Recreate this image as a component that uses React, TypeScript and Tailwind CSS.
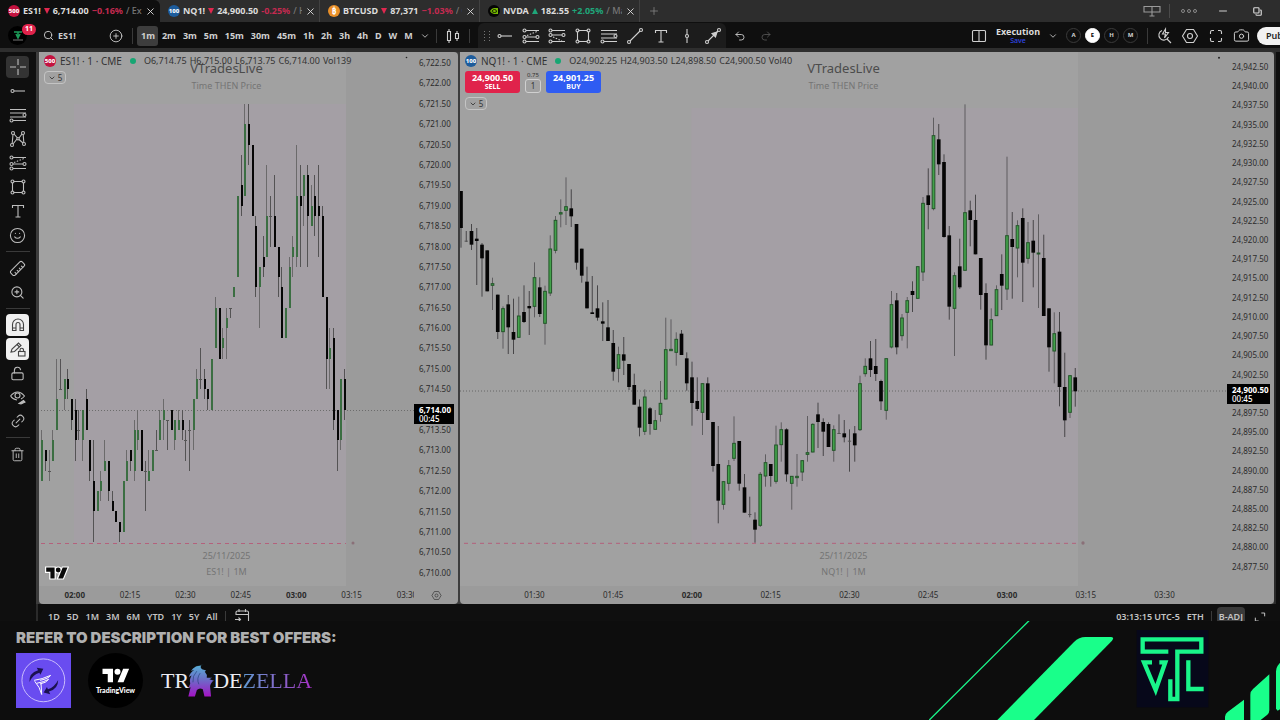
import type { ReactNode } from "react";
import {
  Camera,
  ChevronDown,
  CirclePlus,
  Copy,
  Link2,
  LockOpen,
  Minus,
  Plus,
  Redo2,
  Ruler,
  Search,
  Smile,
  Trash2,
  Undo2,
  X,
  ZoomIn,
} from "lucide-react";

type Candle = [high: number, top: number, bottom: number, low: number, up: 0 | 1];

/* One-minute bars in quarter-point ticks above 6,710.00, from 01:51. */
const ES: Candle[] = [
  [14, 13, 9, 9, 1], [12, 12, 11, 10, 0], [12, 10, 10, 9, 1], [14, 13, 11, 11, 1], [21, 17, 14, 14, 1],
  [21, 18, 18, 18, 0], [19, 19, 17, 16, 1], [20, 19, 18, 17, 0], [17, 17, 15, 14, 0], [17, 16, 13, 11, 0],
  [16, 14, 14, 13, 0], [16, 16, 13, 11, 1], [18, 17, 14, 14, 0], [13, 13, 10, 9, 0], [13, 9, 6, 3, 0],
  [8, 8, 6, 6, 1], [10, 9, 8, 7, 1], [13, 11, 10, 10, 1], [11, 11, 8, 7, 0], [8, 7, 6, 6, 0],
  [6, 6, 5, 5, 0], [5, 5, 4, 3, 0], [9, 9, 4, 4, 1], [12, 11, 9, 9, 1], [12, 12, 11, 10, 0],
  [15, 14, 10, 9, 1], [16, 14, 13, 12, 1], [14, 14, 10, 10, 0], [11, 10, 10, 6, 0], [12, 10, 9, 9, 1],
  [12, 12, 10, 10, 1], [14, 12, 12, 12, 0], [16, 15, 13, 13, 1], [17, 16, 15, 13, 1], [15, 15, 15, 12, 0],
  [16, 16, 14, 14, 0], [15, 15, 13, 12, 1], [16, 15, 14, 14, 1], [16, 15, 14, 13, 0], [14, 13, 13, 11, 0],
  [15, 14, 14, 10, 0], [17, 17, 14, 12, 1], [20, 19, 17, 17, 1], [22, 19, 19, 18, 0], [20, 19, 18, 17, 0],
  [18, 18, 17, 16, 0], [21, 21, 16, 16, 1], [27, 26, 22, 22, 1], [26, 26, 21, 21, 0], [24, 23, 22, 21, 1],
  [26, 25, 24, 21, 1], [26, 26, 26, 25, 0], [28, 28, 27, 27, 1], [37, 37, 29, 29, 1], [41, 38, 36, 35, 0],
  [46, 44, 37, 37, 1], [46, 44, 42, 40, 0], [42, 42, 35, 35, 0], [35, 34, 28, 27, 0], [30, 30, 28, 24, 1],
  [33, 31, 30, 29, 0], [40, 35, 31, 31, 1], [37, 35, 35, 32, 0], [39, 35, 32, 32, 0], [32, 32, 29, 27, 0],
  [30, 28, 23, 23, 0], [26, 26, 23, 23, 1], [31, 30, 26, 26, 1], [33, 32, 31, 29, 1], [42, 37, 31, 30, 1],
  [40, 37, 36, 30, 0], [39, 39, 37, 34, 1], [40, 39, 35, 30, 0], [38, 36, 34, 34, 1], [39, 37, 35, 33, 0],
  [40, 36, 35, 31, 0], [36, 35, 27, 27, 0], [27, 27, 21, 18, 0], [24, 22, 21, 18, 1], [24, 23, 15, 14, 0],
  [16, 16, 13, 10, 0], [19, 19, 13, 12, 1], [20, 19, 16, 15, 0],
];

/* One-minute bars in plot units measured down from the session box, from 01:16. */
const NQ: Candle[] = [
  [303, 303, 414, 473, 0], [423, 453, 453, 456, 0], [402, 423, 464, 480, 0], [414, 446, 453, 585, 0],
  [459, 464, 505, 620, 0], [481, 481, 604, 604, 0], [563, 580, 587, 660, 1], [614, 614, 726, 747, 0],
  [649, 655, 726, 776, 1], [615, 643, 712, 792, 0], [626, 726, 749, 792, 0], [620, 677, 743, 743, 1],
  [586, 666, 696, 699, 0], [603, 648, 655, 735, 0], [517, 562, 650, 682, 1], [562, 592, 672, 681, 0],
  [587, 603, 701, 764, 1], [436, 476, 610, 618, 1], [378, 390, 482, 490, 1], [328, 367, 373, 412, 1],
  [262, 349, 362, 405, 1], [298, 355, 379, 411, 0], [402, 402, 518, 539, 0], [476, 476, 557, 578, 0],
  [530, 575, 655, 655, 0], [558, 667, 672, 672, 0], [586, 655, 683, 692, 0], [637, 694, 701, 753, 0],
  [630, 712, 753, 753, 0], [720, 759, 845, 872, 0], [770, 793, 836, 877, 1], [741, 793, 812, 855, 0],
  [822, 822, 891, 900, 0], [851, 885, 944, 944, 0], [928, 950, 1013, 1039, 0], [898, 920, 1025, 1035, 1],
  [951, 955, 1002, 1034, 0], [960, 991, 1019, 1019, 1], [873, 939, 974, 995, 1], [683, 778, 928, 928, 1],
  [688, 777, 783, 783, 1], [727, 747, 788, 827, 1], [720, 731, 795, 795, 0], [787, 805, 880, 902, 0],
  [815, 862, 939, 1007, 0], [862, 933, 957, 963, 0], [880, 880, 968, 1035, 1], [862, 880, 990, 990, 0],
  [996, 996, 1128, 1145, 0], [1008, 1122, 1232, 1300, 0], [1174, 1174, 1244, 1259, 1], [1110, 1126, 1181, 1202, 1],
  [979, 1059, 1106, 1113, 1], [1053, 1053, 1181, 1202, 0], [1152, 1192, 1268, 1268, 0], [1220, 1273, 1273, 1282, 0],
  [1267, 1289, 1319, 1358, 0], [1146, 1152, 1307, 1311, 1], [1093, 1117, 1159, 1190, 1], [1122, 1122, 1158, 1190, 0],
  [1007, 1064, 1175, 1181, 1], [997, 1018, 1065, 1115, 1], [1015, 1018, 1153, 1175, 0], [1158, 1158, 1181, 1259, 1],
  [1092, 1158, 1164, 1190, 1], [1110, 1111, 1147, 1173, 1], [978, 1087, 1094, 1115, 1], [1000, 1002, 1087, 1087, 1],
  [938, 973, 996, 1074, 0], [985, 996, 1025, 1098, 0], [997, 1002, 1071, 1071, 0], [1006, 1018, 1082, 1115, 1],
  [973, 1030, 1030, 1030, 0], [990, 1030, 1042, 1057, 0], [1018, 1053, 1053, 1145, 0], [1008, 1030, 1066, 1115, 0],
  [857, 880, 1020, 1023, 1], [805, 828, 852, 860, 1], [753, 805, 840, 861, 0], [747, 828, 852, 873, 0],
  [869, 873, 934, 960, 0], [805, 805, 962, 989, 1], [603, 643, 772, 775, 1], [609, 631, 772, 793, 0],
  [672, 683, 738, 752, 1], [621, 631, 668, 775, 1], [574, 603, 615, 666, 0], [529, 529, 626, 626, 1],
  [321, 339, 547, 573, 1], [235, 316, 345, 418, 0], [83, 136, 357, 361, 1], [102, 148, 223, 255, 0],
  [193, 216, 441, 443, 0], [408, 436, 650, 689, 0], [547, 556, 656, 798, 1], [446, 529, 592, 597, 0],
  [43, 367, 542, 542, 1], [332, 361, 390, 469, 0], [314, 390, 493, 493, 0], [504, 504, 615, 659, 0],
  [580, 609, 766, 809, 0], [655, 688, 766, 766, 1], [586, 598, 678, 678, 1], [493, 552, 587, 660, 0],
  [200, 436, 598, 630, 1], [366, 447, 471, 626, 0], [391, 406, 475, 562, 1], [355, 384, 518, 636, 0],
  [396, 457, 506, 521, 1], [390, 452, 488, 592, 0], [373, 488, 493, 654, 1], [434, 504, 678, 678, 0],
  [655, 655, 772, 845, 0], [667, 730, 784, 880, 1], [666, 725, 891, 949, 0], [788, 891, 991, 1041, 0],
  [856, 856, 968, 984, 1], [834, 862, 904, 950, 0],
];

function EsPlot() {
  const y = (k: number) => 520.6 - 10.19 * k;
  return (
    <svg viewBox="0 0 375 534" preserveAspectRatio="none" className="absolute inset-0 h-full w-full" aria-label="ES1! candles">
      <rect width="307" height="534" fill="#a1a1a1" />
      <rect x="35" y="52" width="272" height="439" fill="#a49fa5" />
      <line x1="2" x2="375" y1="358.5" y2="358.5" stroke="#6c6c6c" strokeDasharray="1 2" />
      <line x1="2" x2="307" y1="491.5" y2="491.5" stroke="#b4617c" strokeDasharray="4 4" />
      <circle cx="314" cy="491" r="1.5" fill="#8a7078" />
      <circle cx="367.5" cy="5.5" r="0.8" fill="#222" />
      <g shapeRendering="crispEdges">
        {ES.map(([h, t, b, l, up], i) => {
          const x = Math.round(2.4 + 3.69 * i);
          return (
            <g key={i}>
              <rect x={x} y={y(h)} width="1" height={y(l) - y(h)} fill={up ? "#6b6a6b" : "#545354"} />
              <rect
                x={x - (t === b ? 1 : 0)}
                y={y(t)}
                width={t === b ? 3 : 2}
                height={Math.max(1, y(b) - y(t))}
                fill={t === b ? "#555" : up ? "#3b6e42" : "#060606"}
              />
            </g>
          );
        })}
      </g>
    </svg>
  );
}

function NqPlot() {
  return (
    <svg viewBox="0 0 2301 1602" preserveAspectRatio="none" className="absolute inset-0 h-full w-full" aria-label="NQ1! candles">
      <rect width="1854" height="1602" fill="#a1a1a1" />
      <rect x="694" y="168" width="1160" height="1305" fill="#a49fa5" />
      <line x1="0" x2="2301" y1="1017" y2="1017" stroke="#666" strokeWidth="3" strokeDasharray="3 6" />
      <line x1="12" x2="1854" y1="1474" y2="1474" stroke="#b4617c" strokeWidth="3" strokeDasharray="12 12" />
      <circle cx="1869" cy="1473" r="5" fill="#8a7078" />
      <circle cx="2277" cy="17" r="3" fill="#222" />
      <g transform="translate(0 114)">
        {NQ.map(([h, t, b, l, up], i) => {
          const x = 3 + 15.75 * i;
          return (
            <g key={i}>
              <rect x={x - 1.5} y={h} width="3" height={l - h} fill={up ? "#5f5d60" : "#474648"} />
              {b - t < 2 ? (
                <rect x={x - 5} y={t - 1} width="10" height="3" fill="#555" />
              ) : up ? (
                <rect x={x - 4} y={t + 1} width="8" height={Math.max(3, b - t - 2)} fill="#42a34b" stroke="#24552a" strokeWidth="3" />
              ) : (
                <rect x={x - 5.5} y={t} width="11" height={b - t} fill="#050505" />
              )}
            </g>
          );
        })}
      </g>
    </svg>
  );
}

/* ---------- icons ---------- */

function Glyph({ children, className = "size-[18px]" }: { children: ReactNode; className?: string }) {
  return (
    <svg viewBox="0 0 18 18" fill="none" stroke="currentColor" strokeWidth="1.1" className={className} aria-hidden="true">
      {children}
    </svg>
  );
}

const HRay = () => (
  <Glyph>
    <circle cx="3.5" cy="9" r="1.5" />
    <path d="M5 9h11" />
  </Glyph>
);
const Crosshair = () => (
  <Glyph>
    <path d="M9 1v6M9 11v6M1 9h6M11 9h6" />
  </Glyph>
);
const Fib = ({ fill = "#101010" }: { fill?: string }) => (
  <Glyph>
    <path d="M1 3.5h16M1 7h16M1 11h16M3 14.5h14" />
    <circle cx="15.5" cy="9" r="1.5" fill={fill} />
    <circle cx="2.5" cy="14.5" r="1.5" fill={fill} />
  </Glyph>
);
const Position = ({ short = false }: { short?: boolean }) => (
  <Glyph>
    <path d={short ? "M4 3.5h13M4 8h10M4 14.5h13" : "M4 3.5h13M4 10h10M4 14.5h13"} />
    <path d={short ? "M5 10l9 4" : "M5 8.5l10-4"} strokeDasharray="1.5 1.5" />
    <circle cx="2.5" cy="3.5" r="1.5" />
    <circle cx="2.5" cy={short ? 8 : 10} r="1.5" />
    <circle cx="2.5" cy="14.5" r="1.5" />
    <circle cx="15.5" cy={short ? 8 : 10} r="1.5" />
  </Glyph>
);
const Box = () => (
  <Glyph>
    <path d="M4.5 3.5h9M4.5 14.5h9M3.5 4.5v9M14.5 4.5v9" />
    <circle cx="3.5" cy="3.5" r="1.5" />
    <circle cx="14.5" cy="3.5" r="1.5" />
    <circle cx="3.5" cy="14.5" r="1.5" />
    <circle cx="14.5" cy="14.5" r="1.5" />
  </Glyph>
);
const Pattern = () => (
  <Glyph>
    <path d="M3.2 13.500 4 4.500M5 4l3.500 4M4 14l4-5M10 8l3-4M10 9.500l4 3.500M14.200 4.500l.6 8" />
    <circle cx="4" cy="3" r="1.5" />
    <circle cx="14" cy="3" r="1.5" />
    <circle cx="3" cy="15" r="1.5" />
    <circle cx="15" cy="14" r="1.5" />
    <circle cx="9" cy="8.7" r="1.2" />
  </Glyph>
);
const TextTool = () => (
  <Glyph>
    <path d="M3.5 6V3.5h11V6M9 3.5v11.5M6.500 15h5" />
  </Glyph>
);
const Trend = () => (
  <Glyph>
    <path d="M4 14 14 4" />
    <circle cx="3" cy="15" r="1.5" />
    <circle cx="15" cy="3" r="1.5" />
  </Glyph>
);
const VLine = () => (
  <Glyph>
    <path d="M9 2v5.5M9 10.500V16" />
    <circle cx="9" cy="9" r="1.5" />
  </Glyph>
);
const ArrowTool = () => (
  <Glyph>
    <path d="M4 14 14 4" />
    <path d="M8 6.500 13 5l-1.500 5z" fill="currentColor" />
    <circle cx="3" cy="15" r="1.5" />
    <circle cx="15" cy="3" r="1.5" />
  </Glyph>
);
const Magnet = () => (
  <Glyph>
    <path d="M3.500 14.500V8.500a5.500 5.500 0 0 1 11 0v6h-3.500v-6a2 2 0 0 0-4 0v6zM3.500 12H7M11 12h3.500" />
  </Glyph>
);
const PencilLock = () => (
  <Glyph>
    <path d="M2 12l1-3 6.500-6 2.500 2.500-6.500 6zM8 4.500 10.500 7" />
    <rect x="9.5" y="11.5" width="6.5" height="4.5" />
    <path d="M11 11.500V10a1.700 1.700 0 0 1 3.500 0v1.500" />
  </Glyph>
);
const EyePencil = () => (
  <Glyph>
    <path d="M1.500 8Q8.500 0 15.500 8 14 10 12 11M1.500 8Q4 11.500 8 12" />
    <circle cx="8.5" cy="7.5" r="2.5" />
    <path d="M10 15.500l4.500-3 1.500 1.500-4 2z" fill="currentColor" />
  </Glyph>
);
const Candles = () => (
  <Glyph>
    <path d="M3.500 4.500h3v9h-3zM5 2v2.500M5 13.500V16M11.500 6.500h3v5h-3zM13 4v2.500M13 11.500V14" />
  </Glyph>
);
const Hex = ({ className }: { className?: string }) => (
  <Glyph className={className}>
    <path d="M5.500 2.500h7l4 6.500-4 6.500h-7L1.500 9z" />
    <circle cx="9" cy="9" r="2.5" />
  </Glyph>
);
const Fullscreen = () => (
  <Glyph>
    <path d="M3.500 7V5a1.500 1.500 0 0 1 1.500-1.500h2M11 3.500h2A1.500 1.500 0 0 1 14.500 5v2M14.500 11v2a1.500 1.500 0 0 1-1.500 1.500h-2M7 14.500H5A1.500 1.500 0 0 1 3.500 13v-2" />
  </Glyph>
);
const QuickSearch = () => (
  <Glyph>
    <path d="M7 3.500a5 5 0 1 0 6.500 6.500M12 12l4 4M10.500 2 7.500 7h3l-1 4 4-5.500h-3z" />
  </Glyph>
);
const LayoutIcon = () => (
  <Glyph>
    <rect x="2.5" y="3.5" width="13" height="11" rx="1" />
    <path d="M9 3.500v11" />
  </Glyph>
);
const Calendar = () => (
  <Glyph>
    <path d="M3 8V5.500A1.500 1.500 0 0 1 4.500 4H14a1.500 1.500 0 0 1 1.500 1.500V14M3 7.500h12.500M6 2v3M12.500 2v3M2 12.500h5M5.500 10.500l2 2-2 2" />
  </Glyph>
);
const Monitor = () => (
  <Glyph>
    <path d="M1 4.500h16v5.500H1zM9 4.500V14M6.500 14h5" />
  </Glyph>
);

function TvMark({ className, outlined = false }: { className: string; outlined?: boolean }) {
  return (
    <svg viewBox="-2 2 40 22" className={className} fill={outlined ? "#0a0a0a" : "#fff"} aria-label="TradingView logo">
      {outlined && (
        <g stroke="#fff" strokeWidth="4" fill="#fff">
          <path d="M14 22H7V11H0V4h14v18zM28 22h-8l7.500-18h8L28 22z" />
          <circle cx="20" cy="8" r="4" />
        </g>
      )}
      <path d="M14 22H7V11H0V4h14v18zM28 22h-8l7.500-18h8L28 22z" />
      <circle cx="20" cy="8" r="4" />
    </svg>
  );
}

function Badge({ kind }: { kind: string }) {
  if (kind === "btc")
    return <span className="flex size-3 shrink-0 items-center justify-center rounded-full bg-[#e98f28] text-[8px] font-bold text-white">₿</span>;
  if (kind === "nvda")
    return (
      <svg viewBox="0 0 12 12" className="size-3 shrink-0" aria-hidden="true">
        <circle cx="6" cy="6" r="6" fill="#050505" />
        <path d="M2 6q2-3 4-3h4v6H6Q3.500 9 2 6z" fill="#76b900" />
        <path d="M4 6q1-1.500 2.500-1.500T8.500 6 6.500 7.500 4 6z" fill="none" stroke="#050505" strokeWidth="0.8" />
      </svg>
    );
  return (
    <span
      className={`flex size-3 shrink-0 items-center justify-center rounded-full text-[6px] leading-none font-extrabold text-white ${
        kind === "500" ? "bg-[#c4123f]" : "bg-[#1d5c9c]"
      }`}
    >
      {kind}
    </span>
  );
}

/* ---------- top rows ---------- */

const TABS = [
  { kind: "500", name: "ES1!", price: "6,714.00", change: "−0.16%", up: false, tail: "Ex" },
  { kind: "100", name: "NQ1!", price: "24,900.50", change: "-0.25%", up: false, tail: "H" },
  { kind: "btc", name: "BTCUSD", price: "87,371", change: "−1.03%", up: false, tail: "C" },
  { kind: "nvda", name: "NVDA", price: "182.55", change: "+2.05%", up: true, tail: "Mai" },
];

function TabBar() {
  return (
    <header className="flex h-[22px] shrink-0 items-stretch bg-[#2d2d2d] text-[9px] font-bold text-[#dcdcdc]">
      {TABS.map((t, i) => (
        <div
          key={t.name}
          className={`flex w-40 shrink-0 items-center gap-[3px] border-r pr-[3px] pl-2 whitespace-nowrap ${
            i === 0 ? "rounded-tr-md border-[#0f0f0f] bg-[#0f0f0f]" : "border-[#414141]"
          }`}
        >
          <Badge kind={t.kind} />
          <span>{t.name}</span>
          <svg viewBox="0 0 6 6" className="size-1.5 shrink-0" aria-hidden="true">
            <path d={t.up ? "M0 6h6L3 0z" : "M0 0h6L3 6z"} fill={t.up ? "#1fa67a" : "#e0284f"} />
          </svg>
          <span>{t.price}</span>
          <span className={t.up ? "text-[#1fa67a]" : "text-[#c42a50]"}>{t.change}</span>
          <span className="min-w-0 flex-1 overflow-hidden font-medium text-[#777]">/ {t.tail}</span>
          <button aria-label={`Close ${t.name}`} className="shrink-0">
            <X className="size-[11px]" strokeWidth={2} />
          </button>
        </div>
      ))}
      <button aria-label="New tab" className="ml-2 text-[#8a8a8a]">
        <Plus className="size-3" strokeWidth={1.5} />
      </button>
      <div className="ml-auto flex items-center text-[#9a9a9a]">
        <button aria-label="Monitors"><Monitor /></button>
        <span className="ml-2 h-3.5 w-px bg-[#4a4a4a]" />
        <button aria-label="More" className="ml-[11px] flex gap-0.5">
          {[0, 1, 2].map((n) => (
            <span key={n} className="size-1 rounded-full border border-[#8a8a8a]" />
          ))}
        </button>
        <button aria-label="Minimise" className="ml-5 text-[#cfcfcf]"><Minus className="size-3" /></button>
        <button aria-label="Restore" className="mr-[18px] ml-6 text-[#dcdcdc]"><Copy className="size-[9px] -scale-x-100 rotate-90" strokeWidth={3} /></button>
      </div>
    </header>
  );
}

const FRAMES = ["1m", "2m", "3m", "5m", "15m", "30m", "45m", "1h", "2h", "3h", "4h", "D", "W", "M"];

const TOOLS: [string, ReactNode][] = [
  ["Horizontal ray", <HRay />],
  ["Long position", <Position />],
  ["Short position", <Position short />],
  ["Rectangle", <Box />],
  ["Fib retracement", <Fib fill="#1c1c1c" />],
  ["Trend line", <Trend />],
  ["Text", <TextTool />],
  ["Vertical line", <VLine />],
  ["Arrow", <ArrowTool />],
];

function Toolbar() {
  return (
    <div className="flex h-[26px] shrink-0 items-center overflow-hidden bg-[#0f0f0f] pt-px text-[9px] font-bold text-[#cfcfcf]">
      <button aria-label="Account" className="relative ml-2 flex size-[19px] shrink-0 items-center justify-center rounded-full bg-black">
        <svg viewBox="0 0 10 10" className="size-2.5" fill="none" stroke="#1c9a58" aria-hidden="true">
          <path d="M1 1h8M3 3l2 4 2-4M5 1v6" strokeWidth="1.5" />
          <path d="M0 9h10" stroke="#777" />
        </svg>
        <span className="absolute -top-0.5 left-3.5 flex h-[11px] items-center rounded-full bg-[#e0234b] px-[3px] text-[7px] text-white">11</span>
      </button>
      <button className="ml-4 flex w-16 shrink-0 items-center gap-1">
        <Search className="size-[11px]" strokeWidth={2} />
        ES1!
      </button>
      <button aria-label="Compare" className="ml-0.5 shrink-0">
        <CirclePlus className="size-3.5" strokeWidth={1.5} />
      </button>
      <span className="mx-1 ml-[9px] h-4 w-px shrink-0 bg-[#3a3a3a]" />
      {FRAMES.map((f, i) => (
        <button key={f} className={`h-5 shrink-0 rounded-[3px] pr-[3px] pl-1 ${i === 0 ? "bg-[#3d3d3d]" : ""}`}>
          {f}
        </button>
      ))}
      <button aria-label="More intervals" className="ml-1 shrink-0"><ChevronDown className="size-2.5" /></button>
      <span className="ml-1.5 h-3.5 w-px shrink-0 bg-[#3a3a3a]" />
      <button aria-label="Chart type" className="mx-[7px] shrink-0"><Candles /></button>
      <span className="h-3.5 w-px shrink-0 bg-[#3a3a3a]" />
      <div className="ml-2 flex h-full shrink-0 items-center rounded-t-md bg-[#1c1c1c] pl-1.5">
        <span className="grid w-2 grid-cols-2 gap-0.5" aria-hidden="true">
          {[0, 1, 2, 3, 4, 5, 6, 7].map((n) => (
            <span key={n} className="size-px bg-[#777]" />
          ))}
        </span>
        {TOOLS.map(([label, icon]) => (
          <button key={label} aria-label={label} className="flex w-[26px] justify-center">{icon}</button>
        ))}
      </div>
      <button aria-label="Undo" className="ml-2 shrink-0"><Undo2 className="size-3" strokeWidth={1.75} /></button>
      <button aria-label="Redo" className="ml-3.5 shrink-0 text-[#555]"><Redo2 className="size-3" strokeWidth={1.75} /></button>
      <div className="ml-auto flex shrink-0 items-center">
        <button aria-label="Layout setup"><LayoutIcon /></button>
        <button className="ml-2 flex flex-col items-center text-[9px] leading-[10px] text-[#dcdcdc]">
          Execution
          <span className="text-[7px] leading-[8px] font-medium text-[#3148e8]">Save</span>
        </button>
        <button aria-label="Layouts" className="mr-1 ml-2"><ChevronDown className="size-2.5" /></button>
        <div className="ml-1 flex gap-1">
          {["A", "E", "H", "M"].map((c) => (
            <button
              key={c}
              className={`flex size-[15px] items-center justify-center rounded-full border text-[6px] ${
                c === "E" ? "border-white bg-white text-black" : "border-[#3a3a3a]"
              }`}
            >
              {c}
            </button>
          ))}
        </div>
        <span className="mx-[7px] ml-[9px] h-4 w-px bg-[#3a3a3a]" />
        <div className="flex gap-2">
          <button aria-label="Quick search"><QuickSearch /></button>
          <button aria-label="Settings"><Hex /></button>
          <button aria-label="Fullscreen"><Fullscreen /></button>
          <button aria-label="Snapshot"><Camera className="size-[17px]" strokeWidth={1.4} /></button>
        </div>
        <div className="ml-[7px] w-[23px] overflow-hidden">
          <button className="h-[18px] rounded-full bg-[#f2f2f2] px-[9px] text-[9px] font-semibold text-[#222]">Publish</button>
        </div>
      </div>
    </div>
  );
}

/* ---------- left tools ---------- */

function SideButton({ label, children, tone = "" }: { label: string; children: ReactNode; tone?: string }) {
  return (
    <button aria-label={label} className={`my-px flex h-[22px] w-[23px] items-center justify-center rounded ${tone}`}>
      {children}
    </button>
  );
}

const SideRule = () => (
  <span className="flex h-[9px] items-center">
    <span className="h-px w-6 bg-[#3a3a3a]" />
  </span>
);

function Sidebar() {
  return (
    <nav className="flex w-9 shrink-0 flex-col items-center bg-[#0f0f0f] pt-[3px] pr-px text-[#bdbdbd]">
      <SideButton label="Cross" tone="bg-[#333]"><Crosshair /></SideButton>
      <SideButton label="Horizontal ray"><HRay /></SideButton>
      <SideButton label="Fib retracement"><Fib /></SideButton>
      <SideButton label="Patterns"><Pattern /></SideButton>
      <SideButton label="Position"><Position /></SideButton>
      <SideButton label="Rectangle"><Box /></SideButton>
      <SideButton label="Text"><TextTool /></SideButton>
      <SideButton label="Icons"><Smile className="size-[17px]" strokeWidth={1.5} /></SideButton>
      <SideRule />
      <SideButton label="Measure"><Ruler className="size-[17px] rotate-90" strokeWidth={1.5} /></SideButton>
      <SideButton label="Zoom in"><ZoomIn className="size-[15px]" strokeWidth={1.75} /></SideButton>
      <SideRule />
      <SideButton label="Magnet" tone="bg-[#f0f0f0] text-[#444]"><Magnet /></SideButton>
      <SideButton label="Keep drawing" tone="bg-[#f0f0f0] text-[#444]"><PencilLock /></SideButton>
      <SideButton label="Lock drawings"><LockOpen className="size-[15px]" strokeWidth={1.75} /></SideButton>
      <SideButton label="Hide drawings"><EyePencil /></SideButton>
      <SideButton label="Sync drawings"><Link2 className="size-4 -rotate-45" strokeWidth={1.5} /></SideButton>
      <SideRule />
      <SideButton label="Remove"><Trash2 className="size-[15px]" strokeWidth={1.5} /></SideButton>
    </nav>
  );
}

/* ---------- chart panes ---------- */

function fmt(v: number) {
  return v.toLocaleString("en-US", { minimumFractionDigits: 2 });
}

function PriceAxis({ from, step, count, tagAt, tag, width, pad, tagShift }: {
  from: number; step: number; count: number; tagAt: number; tag: string; width: string; pad: string; tagShift: string;
}) {
  return (
    <ol className={`flex shrink-0 flex-col justify-between text-[8px] leading-[12px] text-[#2c2c2c] ${width} ${pad}`}>
      {Array.from({ length: count }, (_, i) => (
        <li key={i} className="relative h-3 pl-[5px]">
          {i === tagAt ? (
            <div className={`absolute right-1 left-0 z-10 bg-black py-px pl-[5px] leading-[9px] text-white ${tagShift}`}>
              <div className="font-bold">{tag}</div>
              <div className="font-medium">00:45</div>
            </div>
          ) : (
            fmt(from - step * i)
          )}
        </li>
      ))}
    </ol>
  );
}

function Watermark({ code }: { code: string }) {
  return (
    <div className="absolute inset-0 flex flex-col items-center pt-2 pb-2">
      <div className="text-[13px] leading-4 text-[#4c4c4c]">VTradesLive</div>
      <div className="mt-1 text-[9px] leading-3 text-[#747474]">Time THEN Price</div>
      <div className="mt-auto text-[9px] leading-3 text-[#747474]">25/11/2025</div>
      <div className="mt-1 text-[9px] leading-3 text-[#747474]">{code} | 1M</div>
    </div>
  );
}

function Legend({ kind, name, values }: { kind: string; name: string; values: string[] }) {
  return (
    <div className="flex h-4 items-center whitespace-nowrap text-[#333]">
      <Badge kind={kind} />
      <span className="ml-1 text-[10px]">{name} · 1 · CME</span>
      <span className="mx-2 size-1.5 rounded-full bg-[#17a673]" />
      <span className="flex gap-[3px] text-[9px]">
        {values.map((v) => (
          <span key={v}>{v}</span>
        ))}
      </span>
    </div>
  );
}

const Collapse = () => (
  <button className="flex h-[13px] w-[22px] items-center justify-center gap-0.5 rounded-sm border border-[#c4c4c4] text-[8px] text-[#333]">
    <ChevronDown className="size-2" strokeWidth={2.5} />5
  </button>
);

function TimeAxis({ labels, lead, cell, children }: { labels: string[]; lead: string; cell: number; children?: ReactNode }) {
  return (
    <div className="flex h-[18px] shrink-0 items-center text-[8px] text-[#2c2c2c]">
      <div className="flex min-w-0 flex-1 overflow-hidden">
        <span className={`shrink-0 ${lead}`} />
        {labels.map((t) => (
          <span key={t} style={{ width: `${cell}%` }} className={`shrink-0 text-center ${t.endsWith(":00") ? "font-bold" : ""}`}>
            {t}
          </span>
        ))}
      </div>
      {children}
    </div>
  );
}

function EsPane() {
  return (
    <section className="flex w-[419px] shrink-0 flex-col rounded-sm bg-[#9b9b9b]">
      <div className="flex min-h-0 flex-1">
        <div className="relative min-w-0 flex-1">
          <EsPlot />
          <Watermark code="ES1!" />
          <div className="relative flex h-full flex-col items-start gap-0.5 pt-px pl-[5px]">
            <Legend kind="500" name="ES1!" values={["O6,714.75", "H6,715.00", "L6,713.75", "C6,714.00", "Vol139"]} />
            <Collapse />
            <TvMark outlined className="mt-auto mb-1.5 ml-px h-[14px] w-6" />
          </div>
        </div>
        <PriceAxis from={6722.5} step={0.5} count={26} tagAt={17} tag="6,714.00" width="w-11" pad="pt-[5px] pb-[7px]" tagShift="top-0" />
      </div>
      <TimeAxis labels={["02:00", "02:15", "02:30", "02:45", "03:00", "03:15", "03:30"]} lead="w-2" cell={14.77}>
        <button aria-label="Axis settings" className="flex w-11 justify-center text-[#333]"><Hex className="size-[11px]" /></button>
      </TimeAxis>
    </section>
  );
}

function NqPane() {
  return (
    <section className="flex min-w-0 flex-1 flex-col rounded-sm bg-[#9b9b9b]">
      <div className="flex min-h-0 flex-1">
        <div className="relative min-w-0 flex-1">
          <NqPlot />
          <Watermark code="NQ1!" />
          <div className="relative flex flex-col items-start pt-px pl-[5px]">
            <Legend kind="100" name="NQ1!" values={["O24,902.25", "H24,903.50", "L24,898.50", "C24,900.50", "Vol40"]} />
            <div className="mt-0.5 flex h-[22px] items-stretch gap-[5px] text-white">
              <button className="w-[55px] rounded-[3px] bg-[#e0234b] text-[9px] leading-[9px] font-bold">
                24,900.50
                <span className="block text-[7px] leading-[9px]">SELL</span>
              </button>
              <div className="flex w-4 flex-col items-center text-[#333]">
                <span className="text-[6px] leading-[8px]">0.75</span>
                <button className="h-3.5 w-4 rounded-[3px] border border-[#d0d0d0] text-[8px] leading-[12px]">1</button>
              </div>
              <button className="w-[55px] rounded-[3px] bg-[#2f5cf2] text-[9px] leading-[9px] font-bold">
                24,901.25
                <span className="block text-[7px] leading-[9px]">BUY</span>
              </button>
            </div>
            <div className="mt-1"><Collapse /></div>
          </div>
        </div>
        <PriceAxis from={24942.5} step={2.5} count={27} tagAt={17} tag="24,900.50" width="w-[47px]" pad="pt-[9px] pb-[13px]" tagShift="-top-1" />
      </div>
      <TimeAxis labels={["01:30", "01:45", "02:00", "02:15", "02:30", "02:45", "03:00", "03:15", "03:30"]} lead="w-[35px]" cell={10.27}>
        <span className="w-[47px]" />
      </TimeAxis>
    </section>
  );
}

/* ---------- bottom ---------- */

function RangeBar() {
  return (
    <div className="flex h-[17px] shrink-0 overflow-hidden bg-[#0f0f0f] pr-1.5 text-[9px] leading-[12px] font-semibold text-[#c4c4c4]">
      <div className="ml-9 flex w-full items-start gap-[7px] border-l-2 border-[#2b2b2b] pt-[7px] pl-2.5">
        {["1D", "5D", "1M", "3M", "6M", "YTD", "1Y", "5Y", "All"].map((r) => (
          <button key={r}>{r}</button>
        ))}
        <span className="h-2.5 w-px bg-[#3a3a3a]" />
        <button aria-label="Go to date" className="-mt-1"><Calendar /></button>
        <span className="ml-auto">03:13:15 UTC-5</span>
        <button>ETH</button>
        <span className="h-2.5 w-px bg-[#3a3a3a]" />
        <button className="-mx-0.5 -mt-1 h-[19px] rounded bg-[#3a3a3a] px-0.5">B-ADJ</button>
        <button aria-label="Maximise" className="mr-2 ml-1"><Glyph className="size-3"><path d="M11 3h5v5M7 15H2v-5" strokeWidth="1.5" /></Glyph></button>
      </div>
    </div>
  );
}

function TradeZella() {
  return (
    <div className="flex items-center font-['Liberation_Serif',serif] text-[22px] leading-none text-[#ececf2]" aria-label="TradeZella">
      <span>TR</span>
      <svg viewBox="560 190 85 105" className="-mx-0.5 h-[35px] w-7 shrink-0 self-end" aria-hidden="true">
        <defs>
          <linearGradient id="mane" x1="0" y1="0" x2="0" y2="1">
            <stop offset="0" stopColor="#57b4d8" />
            <stop offset="0.45" stopColor="#6a70c8" />
            <stop offset="1" stopColor="#a313c4" />
          </linearGradient>
        </defs>
        <path
          d="M612 194q-30 2-40 20l10-4q-14 10-16 22l8-5q-8 14-4 24l-5 14 6-2-7 28h20l6-20q8-8 18-2l5 22h20l-3-32q4-14 12-16l-14-4 8-5h-16q2-10-6-18l4-4-12-4q-8-6-2-11l-14 2q12-4 22-5z"
          fill="url(#mane)"
        />
        <path d="M590 214q-14 14-12 34M600 220q-12 16-4 34" stroke="#27407a" strokeWidth="2" fill="none" />
      </svg>
      <span>DE</span>
      <span className="bg-linear-to-r from-[#5d9bd2] via-[#8069c8] to-[#a32bc4] bg-clip-text text-transparent">ZELLA</span>
    </div>
  );
}

function Promo() {
  return (
    <footer className="relative h-[99px] shrink-0 overflow-hidden bg-[#0d0d0d]">
      <svg viewBox="0 63 1140 297" className="absolute top-0 right-0 h-full w-[380px]" aria-label="VTL logo">
        <path d="M387 62 88 360" stroke="#19f58a" strokeWidth="4" />
        <path d="M292 360 522 126Q537 111 556 111H634Q644 112 636 122L402 360z" fill="#19ff8a" />
        <path d="M975 360v-10q0-8 8-14l49-37v61zM1051 360v-76q0-10 8-17l49-44v108q0 8-6 13l-20 16zM1128 326v-112q0-10 5-17l7-9v140l-7 4z" fill="#19ff8a" />
        <rect x="710" y="90" width="215" height="232" fill="#07081a" />
        <g fill="none" stroke="#19f58a" strokeWidth="13">
          <path d="M805 155H728V118H904V155H832V297H811V238" />
          <path d="M756 187H732L767 270L796 187H778" />
          <path d="M865 181V267H911" />
        </g>
      </svg>
      <div className="relative flex flex-col items-start pl-4">
        <h2 className="mt-2 font-['Inter',sans-serif] text-[15px] leading-[18px] font-black text-[#b0b0b0]">
          REFER TO DESCRIPTION FOR BEST OFFERS:
        </h2>
        <div className="mt-1.5 flex items-center">
          <svg viewBox="49 160 167 167" className="size-[55px] shrink-0" aria-label="Partner logo">
            <rect x="49" y="160" width="167" height="167" fill="#694cf0" />
            <circle cx="132" cy="243" r="65" fill="none" stroke="#c9bdfb" strokeWidth="3" />
            <path d="M90 248q-2-28 26-36l-4-7 20 3-9 18-3-6q-20 6-30 28zM177 242q0 28-28 35l4 8-20-5 10-17 3 7q20-6 31-28z" fill="#1b1150" />
            <path d="M104 243q24-3 50-15-6 10-32 15M112 252q22-4 36-12-6 10-26 14M106 246q16 18 21 40l-2-34" fill="none" stroke="#fff" strokeWidth="3" />
          </svg>
          <div className="ml-[17px] flex size-[55px] flex-col items-center justify-center rounded-full bg-black">
            <TvMark className="h-[17px] w-[30px]" />
            <span className="mt-0.5 font-['Lato',sans-serif] text-[7px] leading-[9px] font-black text-white">TradingView</span>
          </div>
          <div className="ml-[18px]"><TradeZella /></div>
        </div>
      </div>
    </footer>
  );
}

export default function App() {
  return (
    <div className="flex h-screen flex-col overflow-hidden bg-[#0f0f0f] font-['Noto_Sans','Open_Sans',sans-serif]">
      <TabBar />
      <Toolbar />
      <div className="h-1 shrink-0 bg-[#2e2e2e]" />
      <main className="flex min-h-0 flex-1">
        <Sidebar />
        <div className="flex min-w-0 flex-1 gap-0.5 bg-[#3c3c3c] pl-[3px]">
          <EsPane />
          <NqPane />
        </div>
        <div className="w-1.5 shrink-0 border-l-2 border-[#2b2b2b] bg-[#0f0f0f]" />
      </main>
      <RangeBar />
      <Promo />
    </div>
  );
}
